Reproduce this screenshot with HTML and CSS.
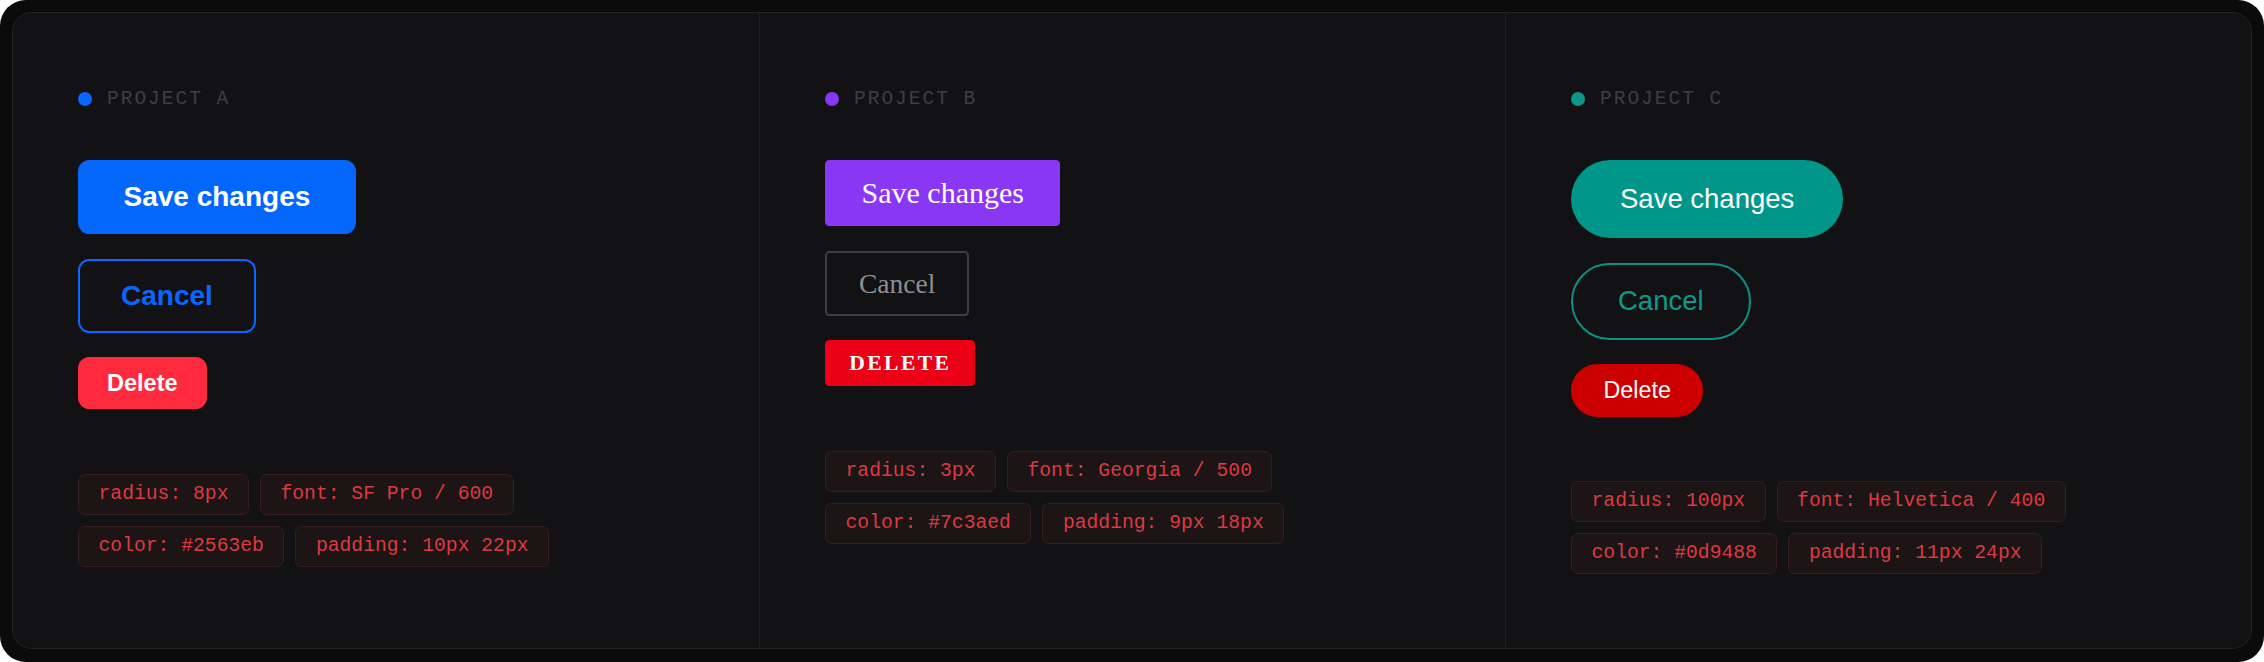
FILE: index.html
```html
<!DOCTYPE html>
<html lang="en">
<head>
<meta charset="utf-8">
<title>Button variants</title>
<link rel="stylesheet" href="styles.css">
</head>
<body>
<div class="frame">
  <div class="panel">
    <section class="col col-a">
      <div class="label"><span class="dot"></span><span class="label-text">PROJECT A</span></div>
      <div class="buttons">
        <button class="btn save">Save changes</button>
        <button class="btn cancel">Cancel</button>
        <button class="btn delete">Delete</button>
      </div>
      <div class="tags">
        <div class="tag-row"><span class="tag">radius: 8px</span><span class="tag">font: SF Pro / 600</span></div>
        <div class="tag-row"><span class="tag">color: #2563eb</span><span class="tag">padding: 10px 22px</span></div>
      </div>
    </section>
    <section class="col col-b">
      <div class="label"><span class="dot"></span><span class="label-text">PROJECT B</span></div>
      <div class="buttons">
        <button class="btn save">Save changes</button>
        <button class="btn cancel">Cancel</button>
        <button class="btn delete">Delete</button>
      </div>
      <div class="tags">
        <div class="tag-row"><span class="tag">radius: 3px</span><span class="tag">font: Georgia / 500</span></div>
        <div class="tag-row"><span class="tag">color: #7c3aed</span><span class="tag">padding: 9px 18px</span></div>
      </div>
    </section>
    <section class="col col-c">
      <div class="label"><span class="dot"></span><span class="label-text">PROJECT C</span></div>
      <div class="buttons">
        <button class="btn save">Save changes</button>
        <button class="btn cancel">Cancel</button>
        <button class="btn delete">Delete</button>
      </div>
      <div class="tags">
        <div class="tag-row"><span class="tag">radius: 100px</span><span class="tag">font: Helvetica / 400</span></div>
        <div class="tag-row"><span class="tag">color: #0d9488</span><span class="tag">padding: 11px 24px</span></div>
      </div>
    </section>
  </div>
</div>
</body>
</html>
```

FILE: styles.css
```css
* { box-sizing: border-box; }

html, body {
  margin: 0;
  padding: 0;
  background: #ffffff;
}

.frame {
  width: 2264px;
  height: 662px;
  background: #0b0b0c;
  border-radius: 26px;
  padding: 12px 12px 13px 12px;
}

.panel {
  height: 100%;
  background: #121214;
  border: 1px solid #242427;
  border-radius: 20px;
  display: grid;
  grid-template-columns: repeat(3, 1fr);
  overflow: hidden;
}

.col {
  padding: 76px 65px 0 65px;
  display: flex;
  flex-direction: column;
  align-items: flex-start;
}

.col + .col {
  border-left: 1px solid #1e1e21;
}

.label {
  display: flex;
  align-items: center;
  height: 20px;
  gap: 15px;
  margin-bottom: 51px;
}

.dot {
  width: 14px;
  height: 14px;
  border-radius: 50%;
  flex: none;
}

.col-a .dot { background: #0a66ff; }
.col-b .dot { background: #8a37f5; }
.col-c .dot { background: #0c978a; }

.label-text {
  font-family: "Liberation Mono", "DejaVu Sans Mono", monospace;
  font-size: 19.5px;
  line-height: 20px;
  letter-spacing: 2px;
  color: #3e3e43;
}

.buttons {
  display: flex;
  flex-direction: column;
  align-items: flex-start;
  gap: 24.6px;
}

.btn {
  display: inline-block;
  margin: 0;
  border: 0;
  cursor: pointer;
  white-space: nowrap;
  color: #ffffff;
}

/* Project A — SF Pro / 600 */
.col-a .btn {
  font-family: "Liberation Sans", Arial, sans-serif;
  font-weight: 700;
  border-radius: 11.5px;
}
.col-a .save {
  background: #0466fb;
  font-size: 28px;
  line-height: 34px;
  padding: 20px 45.5px;
}
.col-a .cancel {
  background: transparent;
  border: 2px solid #0a66ff;
  color: #0a66ff;
  font-size: 28px;
  line-height: 34px;
  padding: 18px 41px;
}
.col-a .delete {
  background: #ff2a3d;
  font-size: 23.5px;
  line-height: 28px;
  padding: 12px 29px;
}

/* Project B — Georgia / 500 */
.col-b .btn {
  font-family: "Liberation Serif", Georgia, serif;
  font-weight: 400;
  border-radius: 4.3px;
}
.col-b .save {
  background: #8a37f5;
  font-size: 30px;
  line-height: 34px;
  padding: 16px 36.5px;
}
.col-b .cancel {
  background: transparent;
  border: 2px solid #3e3e42;
  color: #8e8e93;
  font-size: 27.5px;
  line-height: 33px;
  padding: 14px 32px;
}
.col-b .delete {
  background: #eb0016;
  font-size: 21.6px;
  font-weight: 700;
  letter-spacing: 2.4px;
  text-transform: uppercase;
  line-height: 26px;
  padding: 10px 23.7px 10px 24.3px;
}

/* Project C — Helvetica / 400 */
.col-c .btn {
  font-family: "Liberation Sans", Helvetica, Arial, sans-serif;
  font-weight: 400;
  border-radius: 100px;
}
.col-c .save {
  background: #00978a;
  font-size: 27.5px;
  line-height: 32px;
  padding: 23px 49px;
}
.col-c .cancel {
  background: transparent;
  border: 2px solid #0b9184;
  color: #0c9a8b;
  font-size: 27.5px;
  line-height: 32px;
  padding: 20.5px 45px;
}
.col-c .delete {
  background: #cc0000;
  font-size: 23.3px;
  line-height: 28px;
  padding: 12.2px 32.5px;
}

.tags {
  margin-top: 64.5px;
  display: flex;
  flex-direction: column;
  gap: 11px;
}

.tag-row {
  display: flex;
  gap: 11px;
}

.tag {
  font-family: "Liberation Mono", "DejaVu Sans Mono", monospace;
  font-size: 19.7px;
  line-height: 25px;
  padding: 7px 19.5px;
  border: 1px solid #3a1d21;
  background: #1d1416;
  color: #dc3a41;
  border-radius: 7px;
  white-space: nowrap;
}
```
